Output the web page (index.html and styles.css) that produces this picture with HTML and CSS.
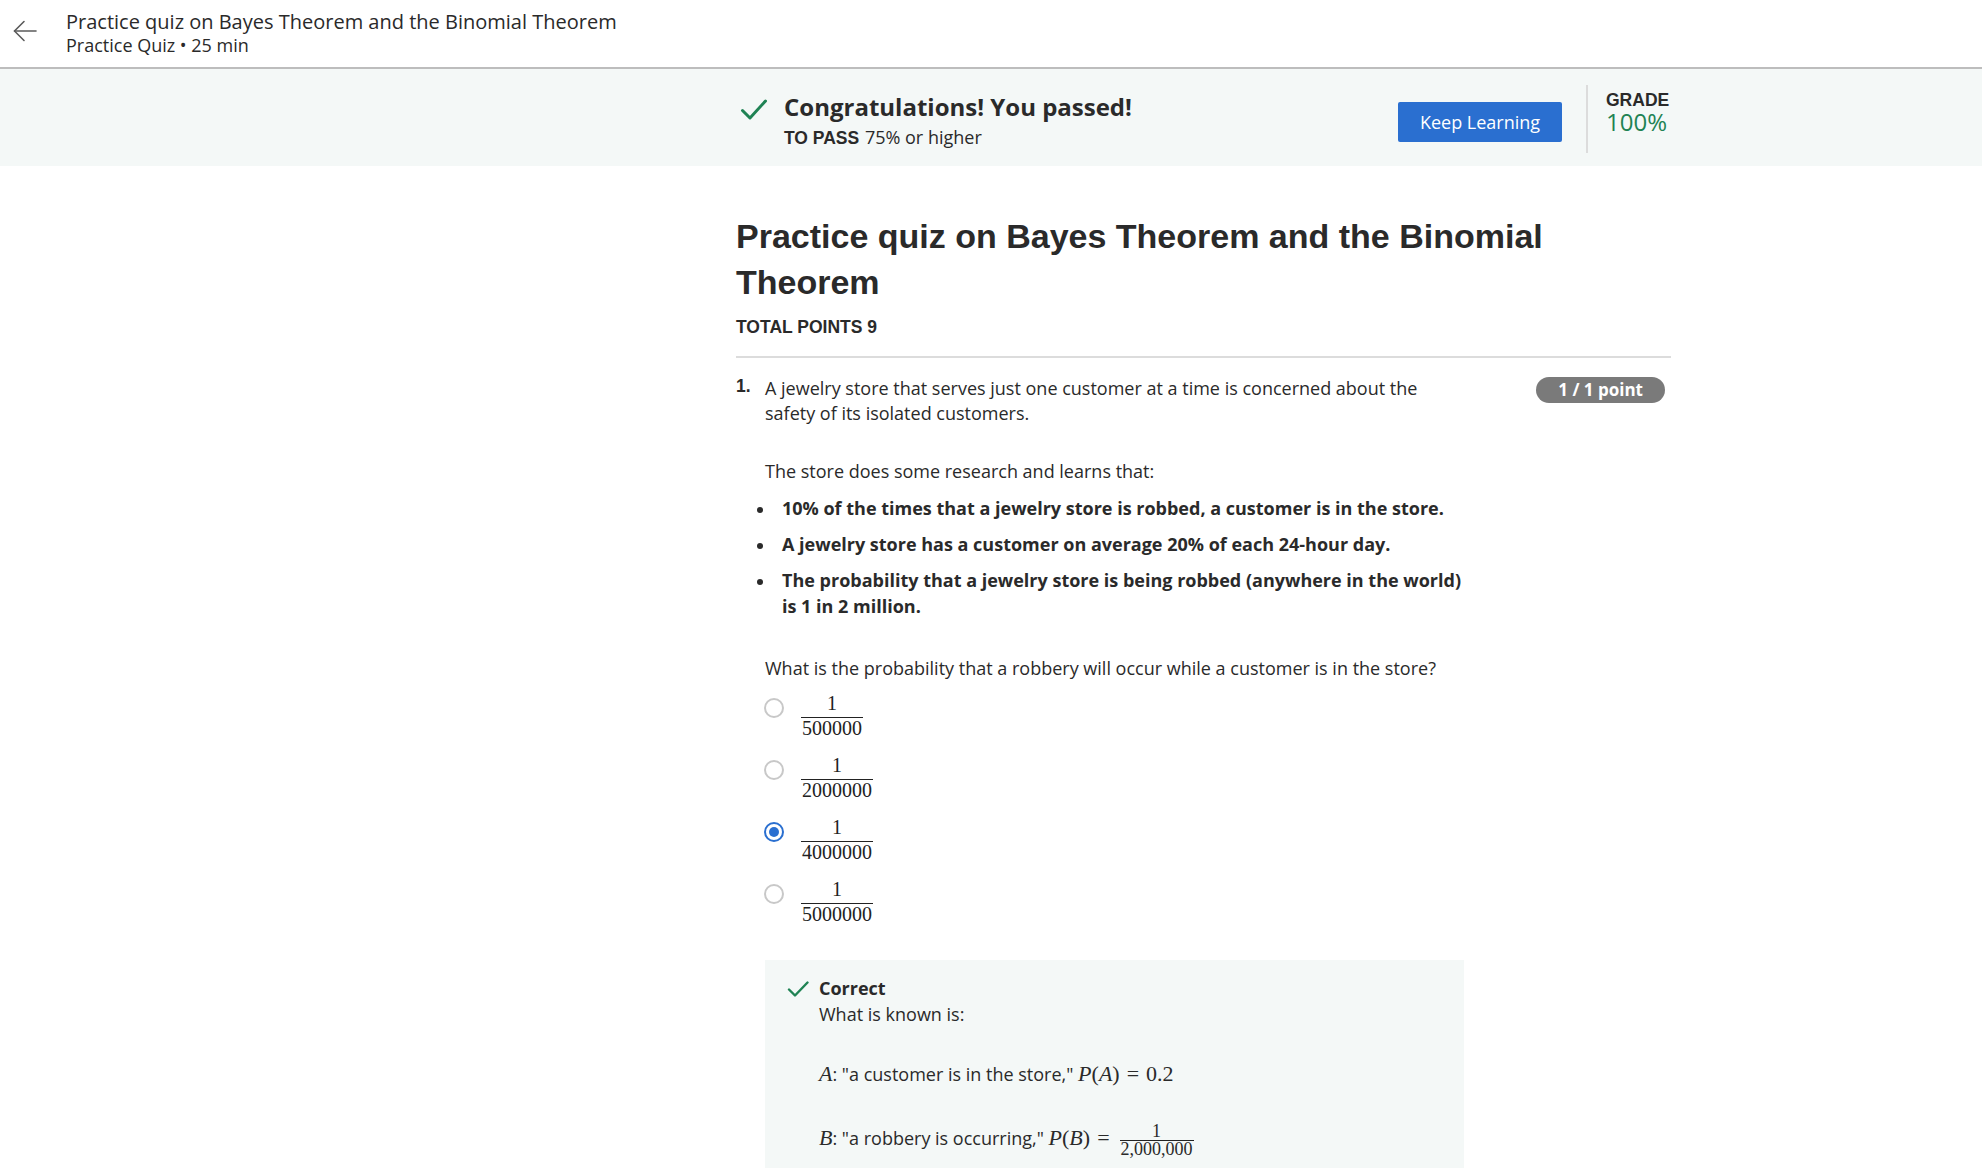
FILE: index.html
```html
<!DOCTYPE html>
<html lang="en">
<head>
<meta charset="utf-8">
<title>Practice quiz on Bayes Theorem and the Binomial Theorem</title>
<link rel="stylesheet" href="styles.css">
</head>
<body>
<header class="topbar">
  <button class="back" aria-label="Back">
    <svg width="26" height="26" viewBox="0 0 26 26" fill="none" stroke="#5b5b5b" stroke-width="1.6" stroke-linecap="round" stroke-linejoin="round"><path d="M24 13H2.5"/><path d="M12 3.5L2.5 13L12 22.5"/></svg>
  </button>
  <div class="topbar-text">
    <div class="topbar-title">Practice quiz on Bayes Theorem and the Binomial Theorem</div>
    <div class="topbar-sub">Practice Quiz • 25 min</div>
  </div>
</header>

<section class="banner">
  <div class="col banner-inner">
    <svg class="pass-check" width="28" height="24" viewBox="0 0 28 24" fill="none" stroke="#1f8354" stroke-width="3" stroke-linecap="round" stroke-linejoin="round"><path d="M2.5 12.5L10 20L25.5 3"/></svg>
    <div class="pass-text">
      <div class="pass-title">Congratulations! You passed!</div>
      <div class="pass-sub"><span class="pass-label">TO PASS</span> 75% or higher</div>
    </div>
    <button class="keep">Keep Learning</button>
    <div class="grade">
      <div class="grade-label">GRADE</div>
      <div class="grade-value">100%</div>
    </div>
  </div>
</section>

<main class="col content">
  <h1 class="quiz-title">Practice quiz on Bayes Theorem and the Binomial Theorem</h1>
  <div class="total">TOTAL POINTS 9</div>
  <div class="divider"></div>

  <div class="question">
    <div class="qnum">1.</div>
    <div class="qbody">
      <p class="qtext">A jewelry store that serves just one customer at a time is concerned about the safety of its isolated customers.</p>
      <p class="qtext gap">The store does some research and learns that:</p>
      <ul class="facts">
        <li>10% of the times that a jewelry store is robbed, a customer is in the store.</li>
        <li>A jewelry store has a customer on average 20% of each 24-hour day.</li>
        <li>The probability that a jewelry store is being robbed (anywhere in the world) is 1 in 2 million.</li>
      </ul>
      <p class="qtext ask">What is the probability that a robbery will occur while a customer is in the store?</p>

      <div class="options">
        <label class="option"><span class="radio"></span><span class="frac"><span class="num">1</span><span class="den">500000</span></span></label>
        <label class="option"><span class="radio"></span><span class="frac"><span class="num">1</span><span class="den">2000000</span></span></label>
        <label class="option"><span class="radio checked"></span><span class="frac"><span class="num">1</span><span class="den">4000000</span></span></label>
        <label class="option"><span class="radio"></span><span class="frac"><span class="num">1</span><span class="den">5000000</span></span></label>
      </div>

      <div class="feedback">
        <svg class="fb-check" width="22" height="18" viewBox="0 0 22 18" fill="none" stroke="#1f8354" stroke-width="2.4" stroke-linecap="round" stroke-linejoin="round"><path d="M2 9.5L8 15.5L20.5 2.5"/></svg>
        <div class="fb-body">
          <div class="fb-title">Correct</div>
          <div class="fb-text">What is known is:</div>
          <div class="fb-line"><span class="m mi">A</span>: "a customer is in the store," <span class="m"><span class="mi">P</span>(<span class="mi">A</span>)<span class="eq">=</span>0.2</span></div>
          <div class="fb-line"><span class="m mi">B</span>: "a robbery is occurring," <span class="m"><span class="mi">P</span>(<span class="mi">B</span>)<span class="eq">=</span></span><span class="sfrac"><span class="snum">1</span><span class="sden">2,000,000</span></span></div>
        </div>
      </div>
    </div>
    <div class="badge">1 / 1 point</div>
  </div>
</main>
</body>
</html>
```

FILE: styles.css
```css
* { box-sizing: border-box; }
html, body { margin: 0; padding: 0; }
body {
  font-family: "Open Sans", "Liberation Sans", sans-serif;
  color: #1f1f1f;
  background: #fff;
  width: 1982px;
  height: 1168px;
  overflow: hidden;
}

.topbar {
  height: 69px;
  border-bottom: 2px solid #bdbdbd;
  display: flex;
  align-items: center;
  background: #fff;
}
.back {
  border: 0;
  background: none;
  padding: 0;
  margin: -5px 23px 0 6px;
  width: 37px;
  height: 30px;
  display: flex;
  align-items: center;
  justify-content: center;
}
.topbar-text { display: flex; flex-direction: column; }
.topbar-title { font-size: 20px; line-height: 24px; color: #2a2a2a; }
.topbar-sub { font-size: 18px; line-height: 23px; color: #2a2a2a; }

.col { margin-left: 736px; width: 935px; }

.banner { background: #f4f8f7; height: 97px; }
.banner-inner {
  height: 100%;
  display: flex;
  align-items: center;
}
.pass-check { flex: none; margin: 0 16px 0 4px; align-self: flex-start; margin-top: 29px; }
.pass-text { flex: 1; padding-top: 6px; }
.pass-title { font-weight: 700; font-size: 24px; line-height: 32px; color: #2a2a2a; }
.pass-sub { font-size: 18px; line-height: 26px; color: #2a2a2a; margin-top: 1px; }
.pass-label { font-family: "Liberation Sans", Arial, sans-serif; font-weight: 700; font-size: 17.5px; margin-right: 1px; }

.keep {
  flex: none;
  background: #2a6fd0;
  color: #fff;
  border: 0;
  border-radius: 2px;
  font-family: "Open Sans", sans-serif;
  font-size: 18px;
  width: 164px;
  height: 40px;
  margin-top: 8px;
  padding: 0;
}
.grade {
  flex: none;
  margin-left: 24px;
  border-left: 2px solid #dcdcdc;
  height: 68px;
  padding-left: 18px;
  width: 85px;
  margin-top: 2px;
}
.grade-label { font-family: "Liberation Sans", Arial, sans-serif; font-weight: 700; font-size: 17.5px; line-height: 20px; color: #2a2a2a; margin-top: 5px; }
.grade-value { font-size: 24px; line-height: 24px; color: #1f8354; margin-top: 0; }

.content { padding-top: 48px; }
.quiz-title {
  font-family: "Liberation Sans", Arial, sans-serif;
  font-weight: 700;
  font-size: 34px;
  line-height: 46px;
  margin: -1px 0 0;
  color: #2a2a2a;
}
.total {
  font-family: "Liberation Sans", Arial, sans-serif;
  font-weight: 700;
  font-size: 17.5px;
  line-height: 22px;
  margin-top: 11px;
  color: #2a2a2a;
}
.divider { height: 2px; background: #dcdcdc; margin-top: 18px; }

.question {
  display: flex;
  align-items: flex-start;
  padding-top: 18px;
}
.qnum {
  width: 29px;
  flex: none;
  font-family: "Liberation Sans", Arial, sans-serif;
  font-weight: 700;
  font-size: 17.5px;
  line-height: 24px;
  color: #2a2a2a;
  margin-top: -2px;
}
.qbody { width: 699px; flex: none; }
.qtext { margin: 0; font-size: 18px; line-height: 24.5px; color: #2a2a2a; }
.qtext.gap { margin-top: 34px; }
.facts { list-style: none; margin: 11px 0 0 -8px; padding: 0; }
.facts li {
  display: flex;
  font-weight: 700;
  font-size: 18px;
  line-height: 26px;
  color: #2a2a2a;
  margin-top: 10px;
}
.facts li::before {
  content: "";
  flex: none;
  width: 6px;
  height: 6px;
  border-radius: 50%;
  background: #2a2a2a;
  margin: 12px 19px 0 0;
}
.qtext.ask { margin-top: 37px; }

.options { margin-top: 4px; }
.option { display: flex; align-items: center; height: 62px; }
.radio {
  flex: none;
  width: 20px;
  height: 20px;
  border-radius: 50%;
  border: 2px solid #c8c8c8;
  margin: 0 16px 0 -1px;
  position: relative;
  top: -7px;
}
.radio.checked { border-color: #2a6fd0; }
.radio.checked::after {
  content: "";
  position: absolute;
  left: 3px;
  top: 3px;
  width: 10px;
  height: 10px;
  border-radius: 50%;
  background: #2a6fd0;
}
.frac {
  display: inline-flex;
  flex-direction: column;
  align-items: center;
  font-family: "Liberation Serif", "Times New Roman", serif;
  font-size: 20px;
  color: #222;
  padding: 0 1px;
}
.num { line-height: 22px; padding-bottom: 3px; }
.den { line-height: 20px; border-top: 1.5px solid #222; padding: 0 1px; align-self: stretch; text-align: center; }

.feedback {
  margin-top: 28px;
  background: #f4f8f7;
  display: flex;
  padding: 15px 20px 40px 22px;
  min-height: 220px;
}
.fb-check { flex: none; margin: 5px 10px 0 0; }
.fb-body { flex: 1; }
.fb-title { font-weight: 700; font-size: 18px; line-height: 26px; color: #2a2a2a; }
.fb-text { font-size: 18px; line-height: 26px; color: #2a2a2a; }
.fb-line { font-size: 18px; line-height: 26px; color: #2a2a2a; margin-top: 34px; display: flex; align-items: center; white-space: pre; }
.m { font-family: "Liberation Serif", "Times New Roman", serif; font-size: 22px; }
.mi { font-style: italic; font-family: "Liberation Serif", "Times New Roman", serif; font-size: 22px; }
.eq { margin: 0 7px; }
.sfrac {
  display: inline-flex;
  flex-direction: column;
  align-items: center;
  font-family: "Liberation Serif", "Times New Roman", serif;
  font-size: 18px;
  margin-left: 3px;
  position: relative;
  top: 2px;
}
.snum { line-height: 17px; }
.sden { line-height: 16px; border-top: 1.2px solid #222; padding: 0 1px; }

.badge {
  margin-left: auto;
  margin-right: 6px;
  margin-top: 1px;
  background: #7a7a7a;
  color: #fff;
  font-weight: 700;
  font-size: 17px;
  line-height: 26px;
  height: 26px;
  padding: 0 22px;
  border-radius: 13px;
  white-space: nowrap;
}
```
